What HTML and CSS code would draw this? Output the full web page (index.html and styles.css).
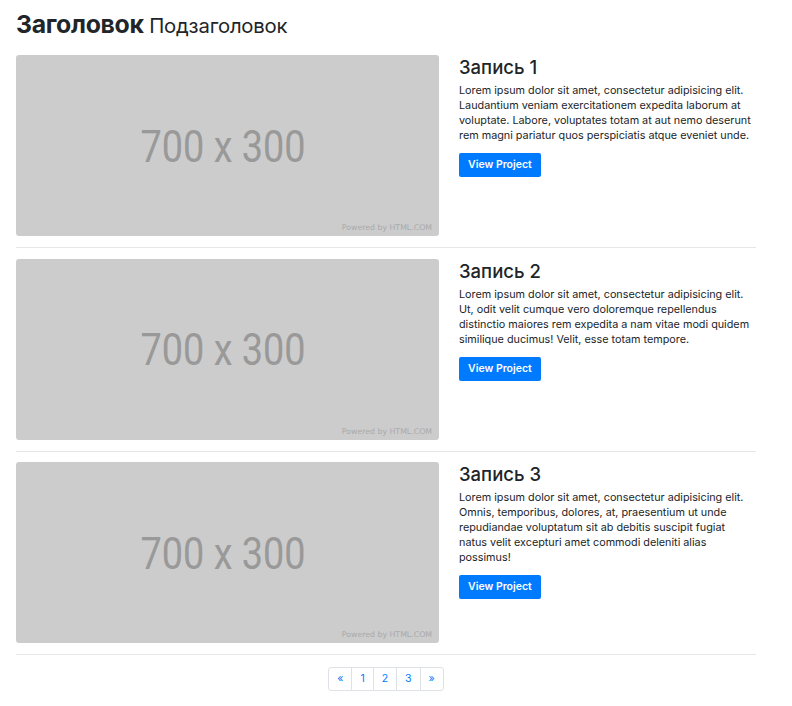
FILE: index.html
```html
<!DOCTYPE html>
<html lang="ru">
<head>
<meta charset="utf-8">
<title>Заголовок</title>
<link rel="stylesheet" href="styles.css">
</head>
<body>
<div class="container">
  <h1 class="page-title">Заголовок <small>Подзаголовок</small></h1>

  <div class="post">
    <div class="thumb"><span class="dims">700 x 300</span><span class="powered">Powered by HTML.COM</span></div>
    <div class="info">
      <h3>Запись 1</h3>
      <p>Lorem ipsum dolor sit amet, consectetur adipisicing elit. Laudantium veniam exercitationem expedita laborum at voluptate. Labore, voluptates totam at aut nemo deserunt rem magni pariatur quos perspiciatis atque eveniet unde.</p>
      <a class="btn" href="#">View Project</a>
    </div>
  </div>
  <hr class="sep">

  <div class="post">
    <div class="thumb"><span class="dims">700 x 300</span><span class="powered">Powered by HTML.COM</span></div>
    <div class="info">
      <h3>Запись 2</h3>
      <p>Lorem ipsum dolor sit amet, consectetur adipisicing elit. Ut, odit velit cumque vero doloremque repellendus distinctio maiores rem expedita a nam vitae modi quidem similique ducimus! Velit, esse totam tempore.</p>
      <a class="btn" href="#">View Project</a>
    </div>
  </div>
  <hr class="sep">

  <div class="post">
    <div class="thumb"><span class="dims">700 x 300</span><span class="powered">Powered by HTML.COM</span></div>
    <div class="info">
      <h3>Запись 3</h3>
      <p>Lorem ipsum dolor sit amet, consectetur adipisicing elit. Omnis, temporibus, dolores, at, praesentium ut unde repudiandae voluptatum sit ab debitis suscipit fugiat natus velit excepturi amet commodi deleniti alias possimus!</p>
      <a class="btn" href="#">View Project</a>
    </div>
  </div>
  <hr class="sep">

  <nav class="pager">
    <a href="#">«</a><a href="#">1</a><a href="#">2</a><a href="#">3</a><a href="#">»</a>
  </nav>
</div>
</body>
</html>
```
FILE: styles.css
```css
* { box-sizing: border-box; }
body {
  margin: 0;
  font-family: Inter, "Liberation Sans", sans-serif;
  color: #212529;
  background: #fff;
}
.container {
  width: 740px;
  margin-left: 16px;
}
.page-title {
  margin: 0;
  padding-top: 9px;
  height: 55px;
  font-size: 24.8px;
  font-weight: 700;
  letter-spacing: -0.3px;
  line-height: 31px;
}
.page-title small {
  font-size: 20.3px;
  font-weight: 400;
  letter-spacing: -0.2px;
}
.post {
  display: flex;
  gap: 20px;
}
.thumb {
  position: relative;
  flex: 0 0 423px;
  height: 181px;
  background: #cccccc;
  border-radius: 3px;
  display: flex;
  align-items: center;
  justify-content: center;
}
.dims {
  font-family: Roboto, "Liberation Sans", sans-serif;
  font-size: 44px;
  color: #999999;
  display: inline-block;
  transform: translate(-4px, 1px) scaleX(0.86);
}
.powered {
  position: absolute;
  right: 7px;
  bottom: 4px;
  font-family: "DejaVu Sans", sans-serif;
  font-size: 7.8px;
  color: #aaaaaa;
}
.info {
  flex: 1;
  padding-top: 1px;
}
.info h3 {
  margin: 0 0 5px;
  font-size: 18.5px;
  font-weight: 500;
  line-height: 22px;
}
.info p {
  margin: 0 0 9px;
  font-size: 10.8px;
  line-height: 15px;
}
.btn {
  display: inline-block;
  background: #007bff;
  color: #fff;
  font-size: 10.5px;
  font-weight: 600;
  text-decoration: none;
  line-height: 24px;
  height: 24px;
  padding: 0 9px;
  border-radius: 2px;
}
.sep {
  border: 0;
  border-top: 1px solid #e6e6e6;
  margin: 11px 0 10.5px;
}
.pager {
  display: flex;
  justify-content: center;
  padding-top: 1px;
}
.pager a {
  display: block;
  height: 24px;
  line-height: 22px;
  padding: 0 8px;
  min-width: 22px;
  text-align: center;
  border: 1px solid #dee2e6;
  margin-left: -1px;
  color: #007bff;
  font-size: 10.5px;
  text-decoration: none;
}
.pager a:first-child { border-radius: 3px 0 0 3px; margin-left: 0; }
.pager a:last-child { border-radius: 0 3px 3px 0; }
```
